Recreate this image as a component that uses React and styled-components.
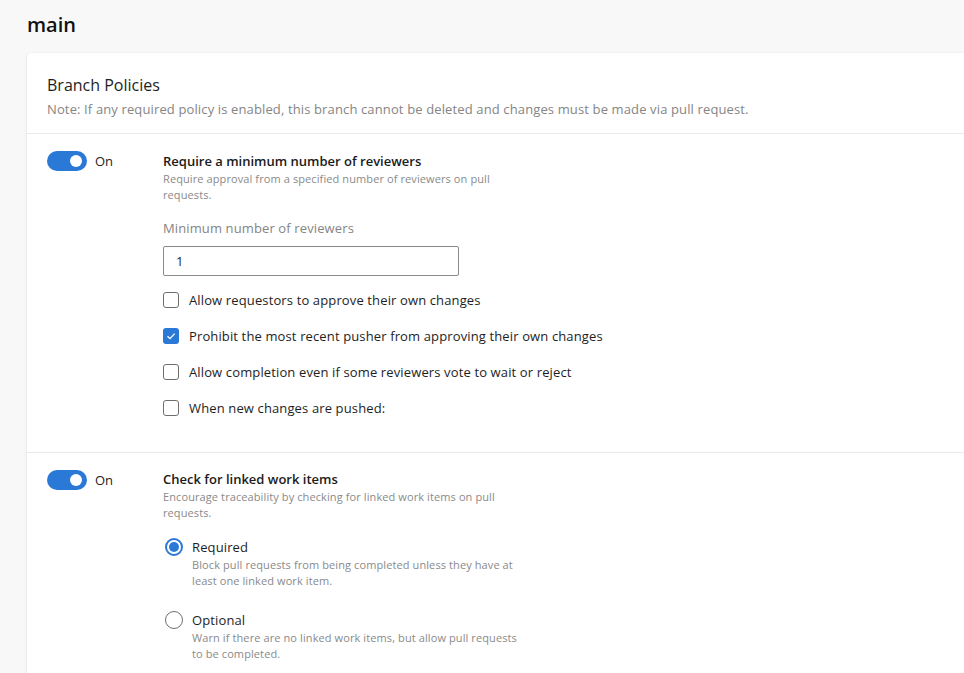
import React from "react";
import styled, { createGlobalStyle } from "styled-components";

const Global = createGlobalStyle`
  html, body { margin: 0; padding: 0; background: #f8f8f8; }
  body { font-family: "Segoe UI", "Open Sans", "Noto Sans", sans-serif; color: #1e1e1e; }
  * { box-sizing: border-box; }
`;

const Page = styled.div`
  padding: 11px 0 0 27px;
  overflow: hidden;
  height: 673px;
`;

const PageTitle = styled.h1`
  margin: 0;
  font-size: 20px;
  line-height: 28px;
  font-weight: 600;
  color: #111;
`;

const Card = styled.div`
  margin-top: 14px;
  width: 960px;
  background: #fff;
  border-radius: 4px;
  box-shadow: 0 1px 3px rgba(0, 0, 0, 0.1), 0 0 1px rgba(0, 0, 0, 0.08);
`;

const CardHeader = styled.div`
  padding: 21px 20px 14px;
  border-bottom: 1px solid #eaeaea;
`;

const CardTitle = styled.div`
  font-size: 16px;
  line-height: 22px;
  color: #1e1e1e;
`;

const Note = styled.div`
  margin-top: 3px;
  font-size: 13px;
  line-height: 20px;
  letter-spacing: 0.13px;
  color: #858585;
`;

const Section = styled.div`
  display: grid;
  grid-template-columns: 116px 1fr;
  padding: ${(p) => p.$pad};
  border-bottom: ${(p) => (p.$last ? "none" : "1px solid #eaeaea")};
`;

const ToggleCell = styled.div`
  display: flex;
  align-items: center;
  gap: 8px;
  height: 20px;
  margin-top: ${(p) => p.$offset || 0}px;
`;

const Toggle = styled.div`
  width: 40px;
  height: 20px;
  border-radius: 10px;
  background: #2b79d6;
  position: relative;
  &::after {
    content: "";
    position: absolute;
    top: 4px;
    right: 5px;
    width: 12px;
    height: 12px;
    border-radius: 50%;
    background: #fff;
  }
`;

const ToggleLabel = styled.span`
  font-size: 13px;
  color: #222;
`;

const Content = styled.div`
  display: flex;
  flex-direction: column;
`;

const PolicyTitle = styled.div`
  font-size: 13px;
  font-weight: 600;
  line-height: 20px;
  color: #1a1a1a;
`;

const Desc = styled.div`
  font-size: 11px;
  line-height: 16px;
  letter-spacing: 0.1px;
  color: #8a8a8a;
  max-width: 334px;
`;

const FieldLabel = styled.div`
  margin-top: 15px;
  font-size: 13px;
  line-height: 20px;
  letter-spacing: 0.12px;
  color: #858585;
`;

const Input = styled.div`
  margin-top: 8px;
  width: 296px;
  height: 30px;
  border: 1px solid #8a8a8a;
  border-radius: 2px;
  display: flex;
  align-items: center;
  padding-left: 12px;
  font-size: 13px;
  color: #1e1e1e;
`;

const CheckList = styled.div`
  margin-top: 6px;
  display: flex;
  flex-direction: column;
`;

const CheckRow = styled.div`
  display: flex;
  align-items: center;
  gap: 10px;
  height: 36px;
  font-size: 13px;
  letter-spacing: 0.13px;
  color: #1e1e1e;
`;

const Box = styled.div`
  width: 16px;
  height: 16px;
  border-radius: 3px;
  border: ${(p) => (p.$checked ? "none" : "1px solid #6e6e6e")};
  background: ${(p) => (p.$checked ? "#2b79d6" : "#fff")};
  display: flex;
  align-items: center;
  justify-content: center;
`;

const RadioList = styled.div`
  margin-top: 16px;
  margin-left: 2px;
  display: flex;
  flex-direction: column;
  gap: 21px;
`;

const RadioItem = styled.div`
  display: grid;
  grid-template-columns: 18px 1fr;
  column-gap: 9px;
`;

const RadioCircle = styled.div`
  width: 18px;
  height: 18px;
  border-radius: 50%;
  margin-top: 1px;
  border: ${(p) => (p.$checked ? "2px solid #2b79d6" : "1px solid #6e6e6e")};
  display: flex;
  align-items: center;
  justify-content: center;
  &::after {
    content: "";
    display: ${(p) => (p.$checked ? "block" : "none")};
    width: 10px;
    height: 10px;
    border-radius: 50%;
    background: #2b79d6;
  }
`;

const RadioLabel = styled.div`
  font-size: 13px;
  line-height: 20px;
  letter-spacing: 0.12px;
  color: #1e1e1e;
`;

const Check = () => (
  <svg width="12" height="12" viewBox="0 0 12 12">
    <path d="M2.5 6.2 L5 8.6 L9.6 3.6" fill="none" stroke="#fff" strokeWidth="1.3" />
  </svg>
);

const checks = [
  { label: "Allow requestors to approve their own changes", checked: false },
  { label: "Prohibit the most recent pusher from approving their own changes", checked: true },
  { label: "Allow completion even if some reviewers vote to wait or reject", checked: false },
  { label: "When new changes are pushed:", checked: false },
];

export default function App() {
  return (
    <>
      <Global />
      <Page>
        <PageTitle>main</PageTitle>
        <Card>
          <CardHeader>
            <CardTitle>Branch Policies</CardTitle>
            <Note>
              Note: If any required policy is enabled, this branch cannot be deleted and changes must be made via pull request.
            </Note>
          </CardHeader>
          <Section $pad="17px 20px 26px">
            <ToggleCell $offset={0}>
              <Toggle />
              <ToggleLabel>On</ToggleLabel>
            </ToggleCell>
            <Content>
              <PolicyTitle>Require a minimum number of reviewers</PolicyTitle>
              <Desc>Require approval from a specified number of reviewers on pull requests.</Desc>
              <FieldLabel>Minimum number of reviewers</FieldLabel>
              <Input>1</Input>
              <CheckList>
                {checks.map((c) => (
                  <CheckRow key={c.label}>
                    <Box $checked={c.checked}>{c.checked && <Check />}</Box>
                    {c.label}
                  </CheckRow>
                ))}
              </CheckList>
            </Content>
          </Section>
          <Section $pad="16px 20px 30px" $last>
            <ToggleCell $offset={1}>
              <Toggle />
              <ToggleLabel>On</ToggleLabel>
            </ToggleCell>
            <Content>
              <PolicyTitle>Check for linked work items</PolicyTitle>
              <Desc>Encourage traceability by checking for linked work items on pull requests.</Desc>
              <RadioList>
                <RadioItem>
                  <RadioCircle $checked />
                  <div>
                    <RadioLabel>Required</RadioLabel>
                    <Desc>Block pull requests from being completed unless they have at least one linked work item.</Desc>
                  </div>
                </RadioItem>
                <RadioItem>
                  <RadioCircle />
                  <div>
                    <RadioLabel>Optional</RadioLabel>
                    <Desc>Warn if there are no linked work items, but allow pull requests to be completed.</Desc>
                  </div>
                </RadioItem>
              </RadioList>
            </Content>
          </Section>
        </Card>
      </Page>
    </>
  );
}
